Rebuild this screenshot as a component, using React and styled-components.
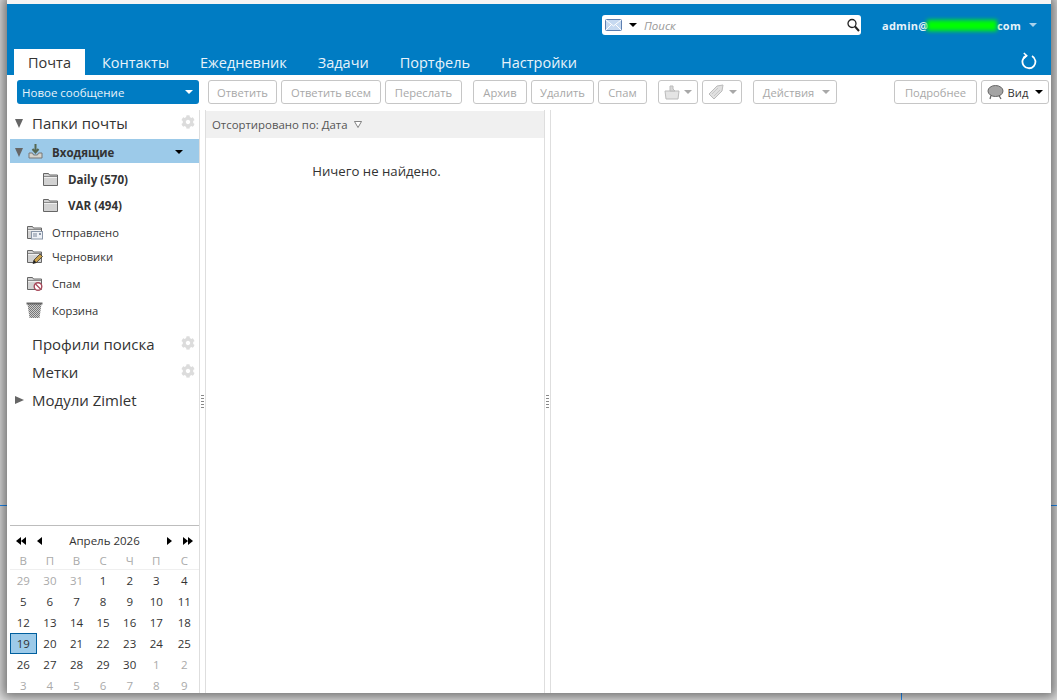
import React from "react";
import styled, { createGlobalStyle } from "styled-components";
import { FaCog } from "react-icons/fa";

const Global = createGlobalStyle`
  html, body { margin: 0; padding: 0; overflow: hidden; }
  body { font-family: "Open Sans", "Noto Sans", sans-serif; color: #333; }
`;

const Desktop = styled.div`
  width: 1057px;
  height: 700px;
  padding: 0 6px 7px 7px;
  box-sizing: border-box;
  background-color: #e0e0e0;
  background-image: linear-gradient(#1e90ff, #1e90ff), linear-gradient(#1e90ff, #1e90ff);
  background-size: 100% 1px, 1px 100%;
  background-position: 0 505px, 901px 0;
  background-repeat: no-repeat;
`;

const Window = styled.div`
  height: 693px;
  display: flex;
  flex-direction: column;
  background: #fff;
  border-top: 4px solid #f4f4f4;
  box-sizing: border-box;
  overflow: hidden;
  box-shadow: 0 0 11px 4px rgba(0, 0, 0, 0.5);
`;

const Banner = styled.header`
  background: #007cc3;
  height: 71px;
  display: flex;
  flex-direction: column;
  flex: none;
`;

const TopRow = styled.div`
  height: 45px;
  display: flex;
  justify-content: flex-end;
  padding: 11px 14px 0 0;
  box-sizing: border-box;
`;

const Search = styled.div`
  width: 259px;
  height: 20px;
  background: #fff;
  border-radius: 3px;
  display: flex;
  align-items: center;
  padding: 0 1px 0 3px;
  box-sizing: border-box;
`;

const SearchHint = styled.span`
  flex: 1;
  font-size: 11.5px;
  font-style: italic;
  color: #999;
  margin-left: 7px;
`;

const User = styled.div`
  margin-left: 21px;
  width: 155px;
  height: 20px;
  display: flex;
  align-items: center;
  font-size: 11px;
  font-weight: 700;
  letter-spacing: 0.25px;
  color: #e8f3fa;
`;

const Blur = styled.span`
  width: 73px;
  height: 11px;
  background: #00ff00;
  filter: blur(2px);
  margin: 1px 0 0 -1px;
`;

const Caret = styled.span`
  display: inline-block;
  flex: none;
  width: 0;
  height: 0;
  border-left: ${(p) => p.$size || 4}px solid transparent;
  border-right: ${(p) => p.$size || 4}px solid transparent;
  border-top: ${(p) => p.$size || 4}px solid ${(p) => p.$color || "#000"};
  margin-left: ${(p) => p.$left || 0}px;
`;

const TabRow = styled.nav`
  height: 26px;
  display: flex;
  align-items: stretch;
  padding-left: 7px;
`;

const Tab = styled.div`
  padding: 0 14px;
  margin-right: 3px;
  display: flex;
  align-items: center;
  font-size: 14.5px;
  color: ${(p) => (p.$active ? "#333" : "#e8f3fa")};
  background: ${(p) => (p.$active ? "#fff" : "transparent")};
`;

const Reload = styled.svg`
  margin: 3px 14px 0 auto;
  width: 16px;
  height: 18px;
`;

const Toolbar = styled.div`
  height: 35px;
  flex: none;
  display: flex;
  align-items: flex-start;
  padding: 5px 2px 0 10px;
  box-sizing: border-box;
  gap: 4px;
`;

const NewMessage = styled.div`
  width: 182px;
  height: 24px;
  background: #007cc3;
  border-radius: 3px;
  display: flex;
  align-items: center;
  justify-content: space-between;
  padding: 0 6px 0 5px;
  box-sizing: border-box;
  font-size: 11.5px;
  color: #e8f3fa;
  margin-right: 5px;
`;

const Button = styled.div`
  width: ${(p) => p.$w}px;
  height: 24px;
  flex: none;
  border: 1px solid #c6c6c6;
  border-radius: 3px;
  box-sizing: border-box;
  background: #fff;
  display: flex;
  align-items: center;
  justify-content: center;
  gap: ${(p) => p.$gap || 4}px;
  padding-left: ${(p) => p.$pl || 0}px;
  font-size: 11.2px;
  color: ${(p) => (p.$on ? "#333" : "#a8a8a8")};
  margin-left: ${(p) => p.$ml || 0}px;
  ${(p) => p.$push && "margin-left: auto;"}
`;

const Main = styled.main`
  flex: 1;
  min-height: 0;
  display: flex;
`;

const Sidebar = styled.aside`
  width: 193px;
  flex: none;
  display: flex;
  flex-direction: column;
  border-right: 1px solid #dedede;
  box-sizing: border-box;
  padding-left: 3px;
  overflow: hidden;
`;

const Sash = styled.div`
  width: 5px;
  flex: none;
  display: flex;
  align-items: center;
  justify-content: center;
`;

const Grip = styled.div`
  width: 3px;
  height: 14px;
  background: repeating-linear-gradient(#888 0 1px, #fff 1px 3px);
`;

const Heading = styled.div`
  height: 28px;
  flex: none;
  display: flex;
  align-items: center;
  font-size: 15px;
  box-sizing: border-box;
  margin-top: ${(p) => p.$top || 0}px;
  padding: 0 4px ${(p) => p.$lift || 0}px 5px;
`;

const Twist = styled.span`
  width: ${(p) => p.$w || 17}px;
  flex: none;
  display: flex;
`;

const Arrow = styled.span`
  width: 0;
  height: 0;
  ${(p) =>
    p.$open
      ? `border-left: 4.5px solid transparent; border-right: 4.5px solid transparent; border-top: 9px solid #666;`
      : `border-top: 4.5px solid transparent; border-bottom: 4.5px solid transparent; border-left: 9px solid #666;`}
`;

const Gear = styled(FaCog)`
  margin-left: auto;
  margin-top: -3px;
  color: #dcdcdc;
  font-size: 14px;
`;

const Inbox = styled.div`
  height: 24px;
  flex: none;
  margin-top: 1px;
  background: #9ccae9;
  display: flex;
  align-items: center;
  padding: 2px 13px 0 5px;
  box-sizing: border-box;
  font-size: 11.5px;
  font-weight: 700;
`;

const Folder = styled.div`
  height: 24px;
  flex: none;
  display: flex;
  align-items: center;
  font-size: ${(p) => (p.$bold ? 11.6 : 11.2)}px;
  font-weight: ${(p) => (p.$bold ? 700 : 400)};
  margin-top: ${(p) => p.$top || 0}px;
  padding-left: ${(p) => p.$indent || 0}px;
`;

const FolderIcon = styled.svg`
  width: 17px;
  height: 16px;
  flex: none;
  margin-right: ${(p) => p.$gap || 8}px;
`;

const Calendar = styled.section`
  margin-top: auto;
  border-top: 1px solid #bdbdbd;
  height: 168px;
  flex: none;
  box-sizing: border-box;
`;

const Month = styled.div`
  height: 28px;
  display: flex;
  align-items: center;
  padding: 1px 6px 0 6px;
  font-size: 11.5px;
  box-sizing: border-box;
`;

const MonthName = styled.span`
  flex: 1;
  text-align: center;
`;

const NavIcon = styled.svg`
  width: ${(p) => p.$w}px;
  height: 8px;
  margin: 0 ${(p) => p.$m || 0}px;
`;

const Grid = styled.div`
  display: grid;
  grid-template-columns: repeat(6, 26.6px) 1fr;
  grid-auto-rows: 21px;
  font-size: 11.5px;
`;

const WeekDays = styled(Grid)`
  grid-auto-rows: 13px;
  border-bottom: 1px solid #efefef;
  padding-bottom: 2px;
  color: #a8a8a8;
`;

const Cell = styled.div`
  display: flex;
  align-items: center;
  justify-content: center;
  box-sizing: border-box;
  color: ${(p) => (p.$muted ? "#aaa" : "#333")};
  ${(p) => p.$today && "background: #9ccae9; border: 1px solid #005f9e;"}
`;

const List = styled.section`
  width: 340px;
  flex: none;
  border-left: 1px solid #dedede;
  border-right: 1px solid #dedede;
  box-sizing: border-box;
`;

const ListHead = styled.div`
  height: 27px;
  margin-top: 1px;
  background: #f0f0f0;
  display: flex;
  align-items: center;
  padding-left: 6px;
  font-size: 11.4px;
  color: #555;
  gap: 6px;
`;

const Empty = styled.div`
  text-align: center;
  margin-top: 24px;
  padding-left: 3px;
  font-size: 13.2px;
`;

const Reader = styled.section`
  flex: 1;
  border-left: 1px solid #dedede;
`;

const FolderShape = () => (
  <>
    <path d="M1.500 2.500h5l1 1.500h8v10.500h-14z" fill="#d2d2d2" stroke="#666" />
    <path d="M2 5.500h13" stroke="#8a8a8a" />
    <path d="M2 6.500h13" stroke="#efefef" />
  </>
);

const PlainFolder = () => (
  <FolderIcon $gap={9} viewBox="0 0 17 16">
    <FolderShape />
  </FolderIcon>
);

const SentIcon = () => (
  <FolderIcon $gap={9} viewBox="0 0 17 16">
    <FolderShape />
    <rect x="5.500" y="7.500" width="11" height="7.500" fill="#eef1f6" stroke="#8a96a8" />
    <path d="M7 10h4M7 12h4" stroke="#7a8699" />
    <rect x="13" y="9" width="2" height="2" fill="#8a96a8" />
  </FolderIcon>
);

const DraftIcon = () => (
  <FolderIcon $gap={9} viewBox="0 0 17 16">
    <FolderShape />
    <path d="M7 15.500l1-3.500 6-6 2.500 2.500-6 6z" fill="#c9a04a" stroke="#333" strokeWidth="0.800" />
    <path d="M7 15.500l1-3.500 2.500 2.500z" fill="#222" />
  </FolderIcon>
);

const SpamIcon = () => (
  <FolderIcon $gap={9} viewBox="0 0 17 16">
    <FolderShape />
    <circle cx="12" cy="11.500" r="3.800" fill="#fff" stroke="#a8485a" strokeWidth="1.400" />
    <path d="M9.500 9l5 5" stroke="#a8485a" strokeWidth="1.300" />
  </FolderIcon>
);

const TrashIcon = () => (
  <FolderIcon $gap={9} viewBox="0 0 17 16">
    <defs>
      <pattern id="mesh" width="2" height="2" patternUnits="userSpaceOnUse">
        <rect width="2" height="2" fill="#ccc" />
        <rect width="1" height="1" fill="#777" />
        <rect x="1" y="1" width="1" height="1" fill="#777" />
      </pattern>
    </defs>
    <path d="M1.500 2h14l-2 14h-10z" fill="url(#mesh)" />
    <path d="M0.500 1.500h16" stroke="#666" strokeWidth="2" />
  </FolderIcon>
);

const InboxIcon = () => (
  <FolderIcon $gap={8} viewBox="0 0 17 16">
    <path d="M8.500 0v7M5.500 5l3 3.500 3-3.500" fill="none" stroke="#556650" strokeWidth="2" />
    <path d="M2 9h3.500l1 2h4l1-2H15v5H2z" fill="#d4d4cc" stroke="#777" />
  </FolderIcon>
);

const cal = [
  [29, 30, 31, 1, 2, 3, 4],
  [5, 6, 7, 8, 9, 10, 11],
  [12, 13, 14, 15, 16, 17, 18],
  [19, 20, 21, 22, 23, 24, 25],
  [26, 27, 28, 29, 30, 1, 2],
  [3, 4, 5, 6, 7, 8, 9],
];

const isMuted = (r, d) => (r === 0 && d > 20) || (r >= 4 && d < 20);

const App = () => (
  <Desktop>
    <Global />
    <Window>
      <Banner>
        <TopRow>
          <Search>
            <svg width="17" height="12" viewBox="0 0 17 12">
              <rect x="0.500" y="0.500" width="16" height="11" rx="1" fill="#c6d9f0" stroke="#5d7fb0" />
              <path d="M1 1l7.500 6L16 1M1 11l5.500-5.500M16 11l-5.500-5.500" fill="none" stroke="#fff" />
            </svg>
            <Caret $left={7} />
            <SearchHint>Поиск</SearchHint>
            <svg width="13" height="14" viewBox="0 0 13 14">
              <circle cx="5" cy="5.500" r="4" fill="none" stroke="#222" strokeWidth="1.300" />
              <path d="M8 8.500l4 4.500" stroke="#222" strokeWidth="2" />
            </svg>
          </Search>
          <User>
            admin@
            <Blur />
            com
            <Caret $color="#a9d2ec" $left={8} />
          </User>
        </TopRow>
        <TabRow>
          <Tab $active>Почта</Tab>
          <Tab>Контакты</Tab>
          <Tab>Ежедневник</Tab>
          <Tab>Задачи</Tab>
          <Tab>Портфель</Tab>
          <Tab>Настройки</Tab>
          <Reload viewBox="0 0 16 18">
            <path d="M5.500 3.700A6.500 6.500 0 1 0 11 4" fill="none" stroke="#fff" strokeWidth="1.800" />
            <path d="M2.800 1l3 2.700-3 2.700" fill="none" stroke="#fff" strokeWidth="1.500" />
          </Reload>
        </TabRow>
      </Banner>

      <Toolbar>
        <NewMessage>
          Новое сообщение
          <Caret $color="#fff" />
        </NewMessage>
        <Button $w={69}>Ответить</Button>
        <Button $w={100}>Ответить всем</Button>
        <Button $w={77}>Переслать</Button>
        <Button $w={54} $ml={7}>Архив</Button>
        <Button $w={63}>Удалить</Button>
        <Button $w={49}>Спам</Button>
        <Button $w={40} $ml={7}>
          <svg width="16" height="16" viewBox="0 0 16 16">
            <path d="M1 7h14l-1 8H2z" fill="#e4e4e4" stroke="#bbb" />
            <path d="M6 7V2h3v3l2 2z" fill="#d8d8d8" stroke="#bbb" />
          </svg>
          <Caret $color="#a8a8a8" />
        </Button>
        <Button $w={40}>
          <svg width="17" height="16" viewBox="0 0 17 16">
            <path d="M1 10l8-8 6-1-1 6-8 8z" fill="#e0e0e0" stroke="#bbb" />
            <path d="M4 10l6-6M6 12l6-6" stroke="#c8c8c8" />
          </svg>
          <Caret $color="#a8a8a8" />
        </Button>
        <Button $w={84} $ml={7} $gap={8} $pl={3}>
          Действия
          <Caret $color="#a8a8a8" />
        </Button>
        <Button $w={83} $push>Подробнее</Button>
        <Button $w={68} $on>
          <svg width="17" height="15" viewBox="0 0 17 15">
            <ellipse cx="8.500" cy="6" rx="7.500" ry="5.500" fill="#a4a4a4" stroke="#666" />
            <path d="M4 10.500l-1 3.500M12 10.500l2 3.500" stroke="#666" strokeWidth="1.300" />
          </svg>
          Вид
          <Caret $left={3} />
        </Button>
      </Toolbar>

      <Main>
        <Sidebar>
          <Heading $lift={2}>
            <Twist><Arrow $open /></Twist>
            Папки почты
            <Gear />
          </Heading>
          <Inbox>
            <Twist $w={12}><Arrow $open /></Twist>
            <InboxIcon />
            Входящие
            <Caret $left={61} />
          </Inbox>
          <Folder $bold $indent={32} $top={4}><PlainFolder />Daily (570)</Folder>
          <Folder $bold $indent={32} $top={2}><PlainFolder />VAR (494)</Folder>
          <Folder $indent={16} $top={3}><SentIcon />Отправлено</Folder>
          <Folder $indent={16}><DraftIcon />Черновики</Folder>
          <Folder $indent={16} $top={3}><SpamIcon />Спам</Folder>
          <Folder $indent={16} $top={3}><TrashIcon />Корзина</Folder>
          <Heading $top={8}>
            <Twist />
            Профили поиска
            <Gear />
          </Heading>
          <Heading>
            <Twist />
            Метки
            <Gear />
          </Heading>
          <Heading>
            <Twist><Arrow /></Twist>
            Модули Zimlet
          </Heading>
          <Calendar>
            <Month>
              <NavIcon $w={10} viewBox="0 0 10 8"><path d="M5 0v8L0 4zM10 0v8L5 4z" /></NavIcon>
              <NavIcon $w={5} $m={11} viewBox="0 0 5 8"><path d="M5 0v8L0 4z" /></NavIcon>
              <MonthName>Апрель 2026</MonthName>
              <NavIcon $w={5} $m={11} viewBox="0 0 5 8"><path d="M0 0v8l5-4z" /></NavIcon>
              <NavIcon $w={10} viewBox="0 0 10 8"><path d="M0 0v8l5-4zM5 0v8l5-4z" /></NavIcon>
            </Month>
            <WeekDays>
              {["В", "П", "В", "С", "Ч", "П", "С"].map((d, i) => (
                <Cell key={i} $muted>{d}</Cell>
              ))}
            </WeekDays>
            <Grid>
              {cal.map((row, r) =>
                row.map((d) => (
                  <Cell key={`${r}-${d}`} $muted={isMuted(r, d)} $today={r === 3 && d === 19}>
                    {d}
                  </Cell>
                ))
              )}
            </Grid>
          </Calendar>
        </Sidebar>
        <Sash><Grip /></Sash>
        <List>
          <ListHead>
            Отсортировано по: Дата
            <svg width="8" height="7" viewBox="0 0 8 7">
              <path d="M0.500 0.500h7L4 6.500z" fill="#fff" stroke="#666" strokeWidth="0.800" />
            </svg>
          </ListHead>
          <Empty>Ничего не найдено.</Empty>
        </List>
        <Sash><Grip /></Sash>
        <Reader />
      </Main>
    </Window>
  </Desktop>
);

export default App;
